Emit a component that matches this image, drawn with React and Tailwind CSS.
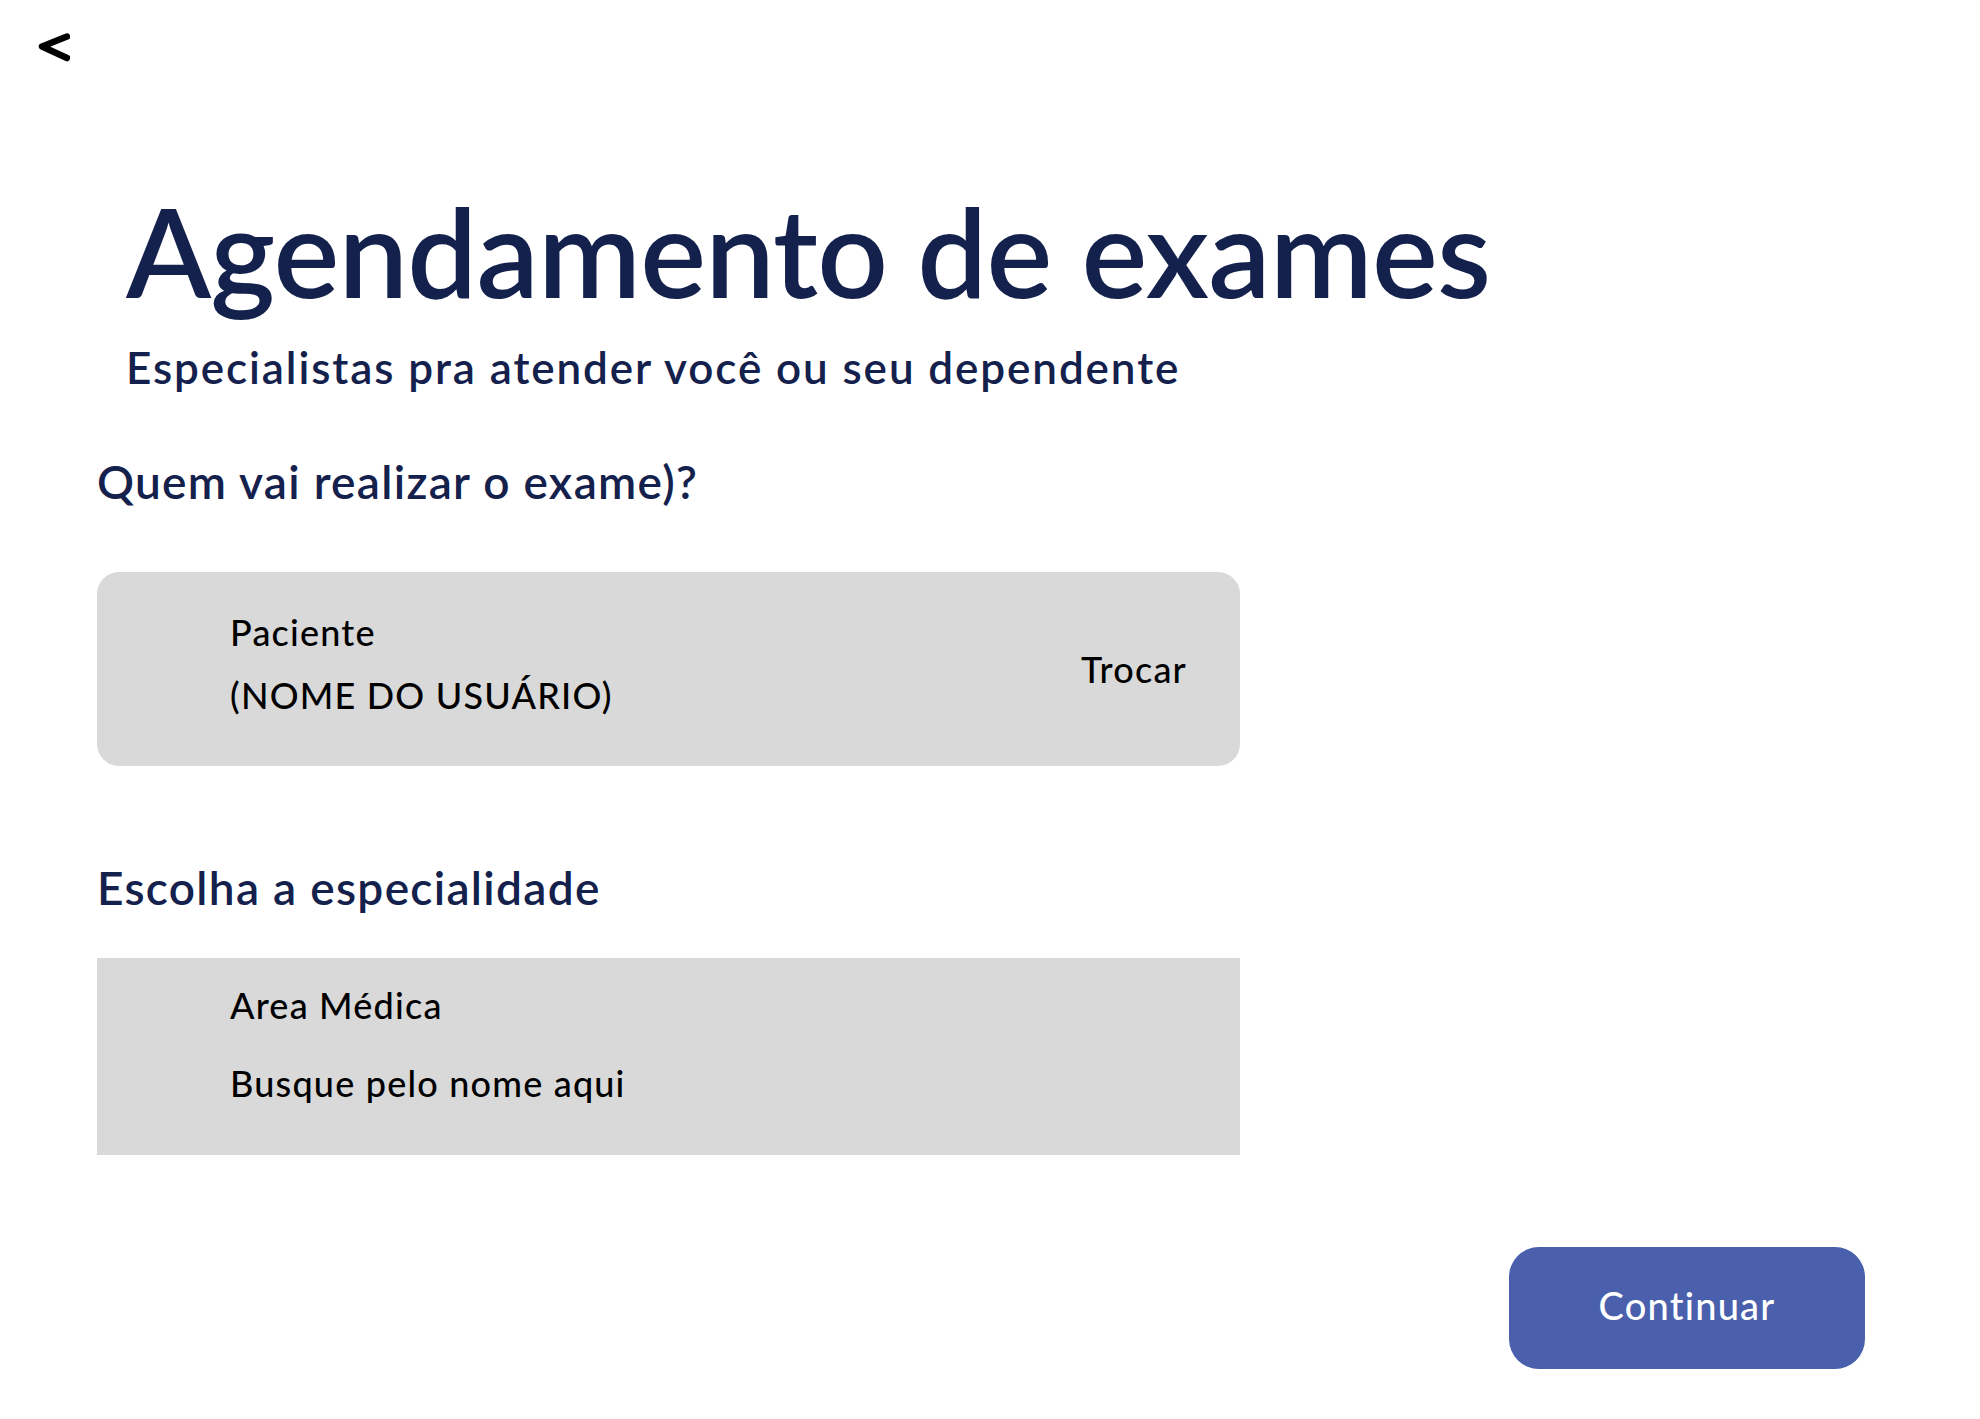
export default function App() {
  return (
    <div className="min-h-[1419px] w-full bg-white font-[Lato,sans-serif] text-[#14214c]">
      <div className="pt-[33px] pl-[38px]">
        <svg width="32" height="30" viewBox="0 0 32 30" fill="none">
          <path d="M29 3.5 L4 13.5 L29 25" stroke="#000" strokeWidth="6.5" strokeLinecap="round" strokeLinejoin="round" />
        </svg>
      </div>

      <div className="pl-[97px]">
        <div className="ml-[29px] mt-[125px]">
          <h1 className="text-[124px] leading-none font-semibold tracking-[-0.8px]">Agendamento de exames</h1>
          <p className="mt-[33px] text-[44px] leading-none font-semibold tracking-[1.9px]">
            Especialistas pra atender você ou seu dependente
          </p>
        </div>

        <h2 className="mt-[70px] text-[46px] leading-none font-semibold tracking-[1.3px]">Quem vai realizar o exame)?</h2>

        <div className="mt-[67px] flex h-[194px] w-[1143px] justify-between rounded-[22px] bg-[#d9d9d9] pl-[133px] pr-[53px] text-black">
          <div className="flex flex-col gap-[27px] pt-[42px] text-[36px] leading-none font-medium tracking-[1.2px]">
            <span>Paciente</span>
            <span>(NOME DO USUÁRIO)</span>
          </div>
          <span className="self-center text-[36px] leading-none font-medium tracking-[1.2px]">Trocar</span>
        </div>

        <h2 className="mt-[99px] text-[46px] leading-none font-semibold tracking-[1.3px]">Escolha a especialidade</h2>

        <div className="mt-[47px] flex h-[197px] w-[1143px] flex-col bg-[#d9d9d9] pl-[133px] pt-[29px] text-black">
          <span className="text-[36px] leading-none font-medium tracking-[1.2px]">Area Médica</span>
          <span className="mt-[42px] text-[36px] leading-none font-medium tracking-[1.2px]">Busque pelo nome aqui</span>
        </div>
      </div>

      <div className="mt-[92px] flex justify-end pr-[115px]">
        <button className="flex h-[122px] w-[356px] items-center justify-center rounded-[30px] bg-[#4a60ad] pb-[6px] text-[38px] font-medium leading-none tracking-[1.2px] text-white">
          Continuar
        </button>
      </div>
    </div>
  );
}
